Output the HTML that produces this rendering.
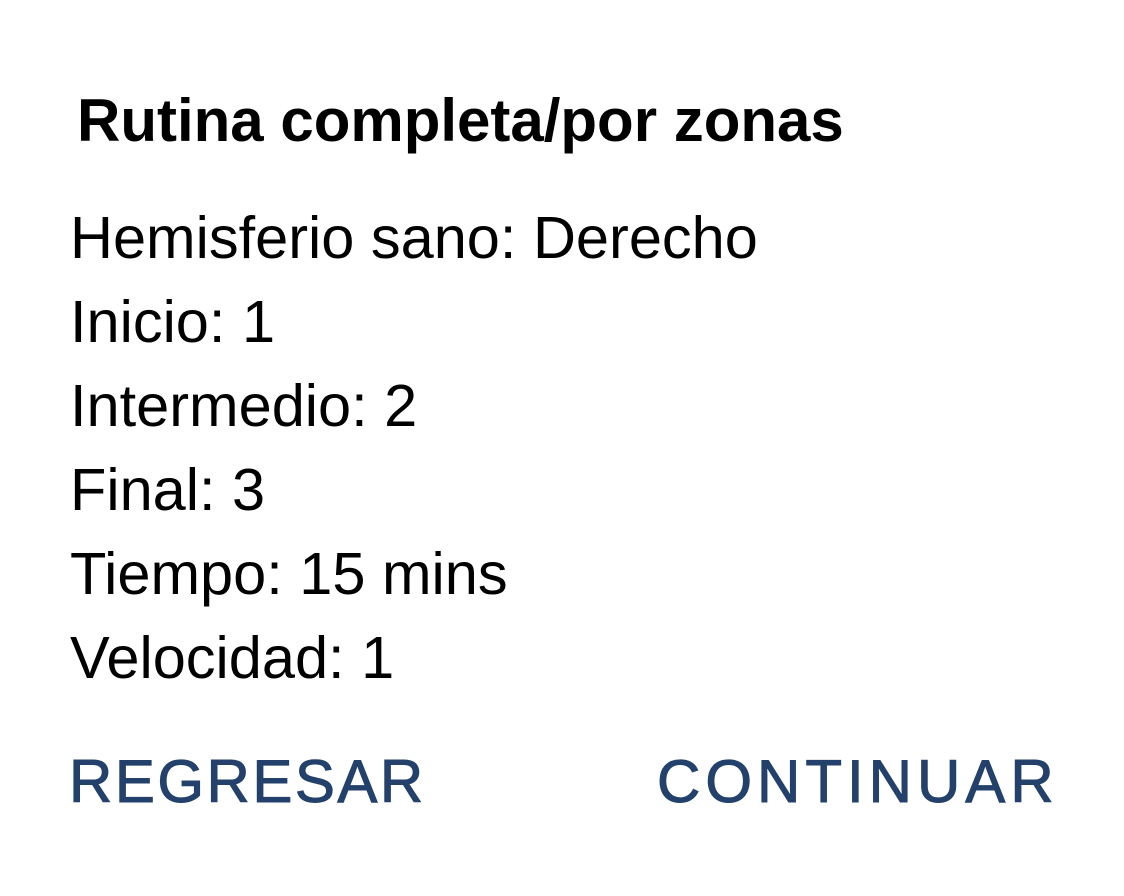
<!DOCTYPE html>
<html><head><meta charset="utf-8"><style>
html,body{margin:0;padding:0;background:#fff;width:1124px;height:896px;overflow:hidden}
body{font-family:"Liberation Sans",sans-serif;color:#000;position:relative}
.t{position:absolute;left:77px;top:81px;font-size:60px;font-weight:bold;white-space:nowrap;line-height:80px}
.b{position:absolute;left:70px;top:196px;font-size:59.5px;line-height:84px;white-space:nowrap}
.btn{position:absolute;top:742px;font-size:60px;line-height:80px;color:#23416b;-webkit-text-stroke:1px #23416b;white-space:nowrap}
</style></head><body>
<div class="t">Rutina completa/por zonas</div>
<div class="b">Hemisferio sano: Derecho<br>Inicio: 1<br>Intermedio: 2<br>Final: 3<br>Tiempo: 15 mins<br>Velocidad: 1</div>
<div class="btn" style="left:69px;letter-spacing:2.5px">REGRESAR</div>
<div class="btn" style="left:657px;letter-spacing:5px">CONTINUAR</div>
</body></html>
